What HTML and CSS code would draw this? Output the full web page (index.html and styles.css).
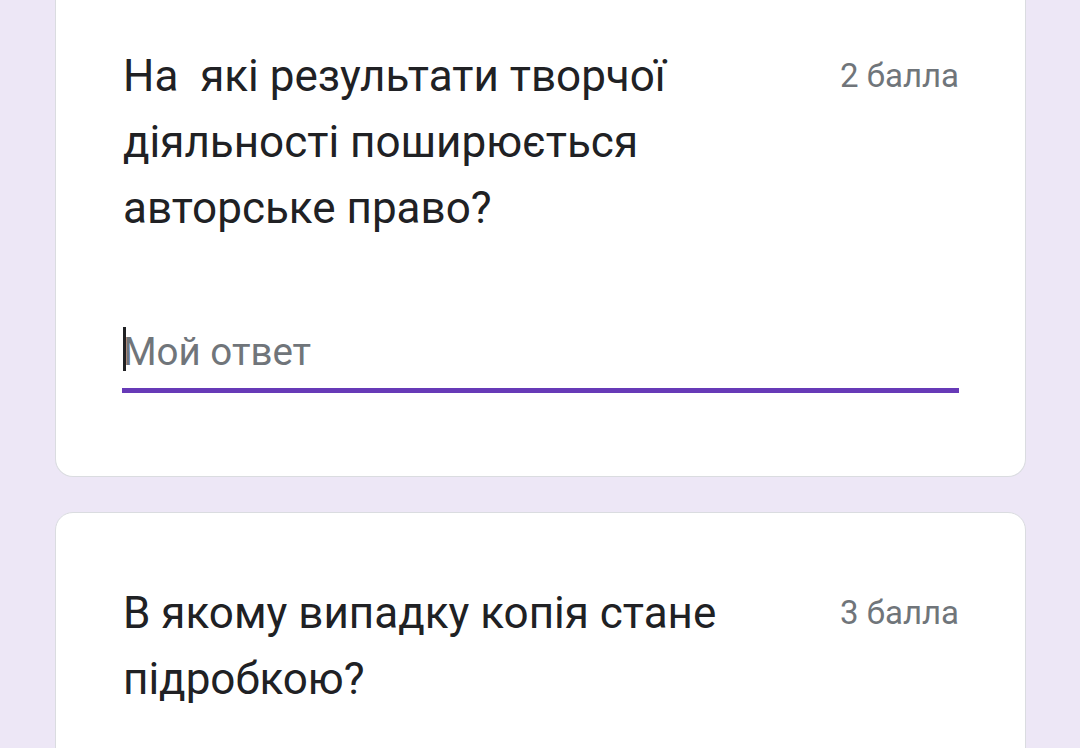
FILE: index.html
```html
<!DOCTYPE html>
<html lang="uk">
<head>
<meta charset="utf-8">
<title>Форма</title>
<link rel="stylesheet" href="styles.css">
</head>
<body>
<main class="list">
  <section class="card card-first">
    <div class="q-head">
      <div class="q-title">На&nbsp; які результати творчої діяльності поширюється авторське право?</div>
      <div class="q-points">2 балла</div>
    </div>
    <div class="answer">
      <div class="answer-text"><span class="caret"></span>Мой ответ</div>
      <div class="answer-line"></div>
    </div>
  </section>
  <section class="card">
    <div class="q-head">
      <div class="q-title">В якому випадку копія стане підробкою?</div>
      <div class="q-points">3 балла</div>
    </div>
  </section>
</main>
</body>
</html>
```

FILE: styles.css
```css
html, body {
  margin: 0;
  padding: 0;
  background: #ede7f6;
  font-family: Roboto, "Noto Sans", sans-serif;
  color: #202124;
  overflow: hidden;
}

.list {
  display: flex;
  flex-direction: column;
  gap: 35px;
  padding: 0 54px 0 55px;
}

.card {
  background: #fff;
  border: 1px solid #dadce0;
  border-radius: 18px;
  padding: 67px 67px 83px 67px;
}

.card-first {
  border-top: none;
  border-top-left-radius: 0;
  border-top-right-radius: 0;
  padding-top: 43px;
}

.q-head {
  display: flex;
  align-items: flex-start;
  gap: 40px;
}

.q-title {
  flex: 1;
  font-size: 44px;
  line-height: 66px;
  max-width: 600px;
}

.q-points {
  margin-left: auto;
  font-size: 33px;
  line-height: 66px;
  color: #70757a;
  white-space: nowrap;
  margin-right: -1px;
}

.answer {
  margin-top: 89px;
  width: 837px;
  margin-left: -1px;
}

.answer-text {
  position: relative;
  font-size: 38.5px;
  line-height: 44px;
  color: #70757a;
  padding-left: 1px;
}

.caret {
  position: absolute;
  left: 1px;
  top: -3px;
  width: 3px;
  height: 44px;
  background: #202124;
}

.answer-line {
  margin-top: 14px;
  height: 5px;
  background: #673ab7;
}
```
